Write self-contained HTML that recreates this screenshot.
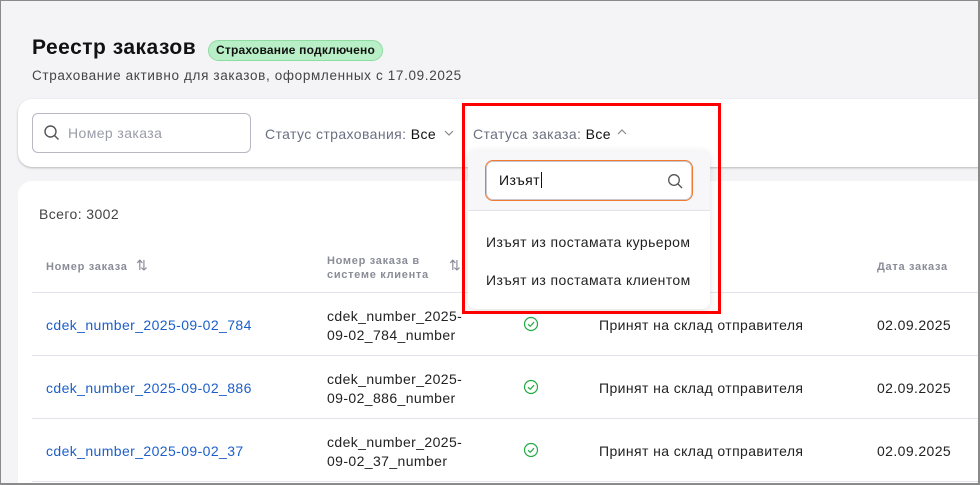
<!DOCTYPE html>
<html><head><meta charset="utf-8"><style>
*{box-sizing:border-box;margin:0;padding:0}
html{overflow:hidden;width:980px;height:485px}
body{width:980px;height:485px;overflow:hidden;background:#f4f4f6;font-family:"Liberation Sans",sans-serif;position:relative;color:#1a1a1a;letter-spacing:.4px}
.frame{position:absolute;left:0;top:0;width:980px;height:485px;border:1px solid #8a8a8a;border-right:2px solid #8a8a8a;border-bottom:2px solid #8a8a8a;pointer-events:none;z-index:20}
.abs{position:absolute}
h1{position:absolute;left:32px;top:36px;font-size:21px;font-weight:bold;color:#111;letter-spacing:.5px}
.badge{position:absolute;left:208px;top:40px;height:21px;padding:0 7px;background:#b9efc6;border:1px solid #8fdca3;border-radius:11px;font-size:12px;font-weight:bold;line-height:19px;color:#111;letter-spacing:.2px}
.sub{left:32px;top:68px;font-size:13.5px;color:#444;letter-spacing:.65px}
.card1{left:18px;top:99px;width:980px;height:68px;background:#fff;border-radius:14px;box-shadow:0 1px 2px rgba(0,0,0,.25)}
.search{left:32px;top:113px;width:219px;height:40px;border:1px solid #b8b8c4;border-radius:6px;background:#fff}
.filter{font-size:14px;color:#6b7080}
.filter b{font-weight:normal;color:#111}
.card2{left:18px;top:181px;width:980px;height:304px;background:#fff;border-radius:14px 14px 0 0}
.th{font-size:11px;font-weight:bold;color:#8a8d98;letter-spacing:.7px}
.line{left:32px;width:960px;height:1px;background:#e2e2ea}
.link{font-size:14px;color:#1d5fc9}
.cell{font-size:14px;color:#222}
.dd{left:468px;top:150px;width:242px;height:159px;background:#fff;border-radius:8px;box-shadow:0 2px 8px rgba(0,0,0,.12);z-index:5}
.red{left:462px;top:103px;width:259px;height:211px;border:3px solid #f00;z-index:10}
</style></head><body>
<h1>Реестр заказов</h1>
<div class="badge">Страхование подключено</div>
<div class="abs sub">Страхование активно для заказов, оформленных с 17.09.2025</div>
<div class="abs card1"></div>
<div class="abs search">
<svg class="abs" style="left:10px;top:10px" width="18" height="18" viewBox="0 0 18 18"><circle cx="7.5" cy="7.5" r="5.5" fill="none" stroke="#555" stroke-width="1.4"/><path d="M11.5 11.5L15.5 15.5" stroke="#555" stroke-width="1.4"/></svg>
<span class="abs" style="left:35px;top:11px;font-size:14px;color:#9a9ca8">Номер заказа</span></div>
<div class="abs filter" style="left:265px;top:126px">Статус страхования: <b>Все</b></div>
<svg class="abs" style="left:444px;top:129px" width="10" height="8" viewBox="0 0 10 8"><path d="M1 2L5 6L9 2" fill="none" stroke="#888" stroke-width="1.2"/></svg>
<div class="abs filter" style="left:473px;top:126px">Статуса заказа: <b>Все</b></div>
<svg class="abs" style="left:617px;top:128px" width="10" height="8" viewBox="0 0 10 8"><path d="M1 6L5 2L9 6" fill="none" stroke="#888" stroke-width="1.2"/></svg>
<div class="abs card2"></div>
<div class="abs" style="left:39px;top:206px;font-size:14px;color:#444">Всего: 3002</div>
<div class="abs th" style="left:46px;top:261px">Номер заказа</div>
<div class="abs" style="left:136px;top:257px;font-size:14px;color:#8a8d98">⇅</div>
<div class="abs th" style="left:327px;top:254px;line-height:14px">Номер заказа в<br>системе клиента</div>
<div class="abs" style="left:449px;top:257px;font-size:14px;color:#8a8d98">⇅</div>
<div class="abs th" style="left:877px;top:261px">Дата заказа</div>
<div class="abs line" style="top:292px"></div>
<div class="abs line" style="top:355px"></div>
<div class="abs line" style="top:418px"></div>
<div class="abs line" style="top:481px"></div>

<div class="abs link" style="left:46px;top:317px">cdek_number_2025-09-02_784</div>
<div class="abs cell" style="left:327px;top:307px;line-height:19px">cdek_number_2025-<br>09-02_784_number</div>
<div class="abs link" style="left:46px;top:380px">cdek_number_2025-09-02_886</div>
<div class="abs cell" style="left:327px;top:370px;line-height:19px">cdek_number_2025-<br>09-02_886_number</div>
<div class="abs link" style="left:46px;top:443px">cdek_number_2025-09-02_37</div>
<div class="abs cell" style="left:327px;top:433px;line-height:19px">cdek_number_2025-<br>09-02_37_number</div>

<svg class="abs" style="left:523px;top:316px" width="16" height="16" viewBox="0 0 16 16"><circle cx="8" cy="8" r="6.5" fill="none" stroke="#22aa44" stroke-width="1.2"/><path d="M5 8.2L7.2 10.3L11 6.2" fill="none" stroke="#22aa44" stroke-width="1.2"/></svg>
<svg class="abs" style="left:523px;top:379px" width="16" height="16" viewBox="0 0 16 16"><circle cx="8" cy="8" r="6.5" fill="none" stroke="#22aa44" stroke-width="1.2"/><path d="M5 8.2L7.2 10.3L11 6.2" fill="none" stroke="#22aa44" stroke-width="1.2"/></svg>
<svg class="abs" style="left:523px;top:442px" width="16" height="16" viewBox="0 0 16 16"><circle cx="8" cy="8" r="6.5" fill="none" stroke="#22aa44" stroke-width="1.2"/><path d="M5 8.2L7.2 10.3L11 6.2" fill="none" stroke="#22aa44" stroke-width="1.2"/></svg>
<div class="abs cell" style="left:599px;top:317px">Принят на склад отправителя</div>
<div class="abs cell" style="left:599px;top:380px">Принят на склад отправителя</div>
<div class="abs cell" style="left:599px;top:443px">Принят на склад отправителя</div>
<div class="abs cell" style="left:877px;top:317px">02.09.2025</div>
<div class="abs cell" style="left:877px;top:380px">02.09.2025</div>
<div class="abs cell" style="left:877px;top:443px">02.09.2025</div>

<div class="abs dd">
<div class="abs" style="left:0;top:0;width:242px;height:61px;background:#f7f7f9;border-radius:8px 8px 0 0;border-bottom:1px solid #e2e2ea"></div>
<div class="abs" style="left:17px;top:10px;width:208px;height:41px;border:1px solid #f07a30;border-radius:8px;background:#fff;box-shadow:inset 0 0 0 1px #c8c8d0">
<span class="abs" style="left:13px;top:11px;font-size:14px;color:#111">Изъят<span style="border-left:1px solid #111;margin-left:1px"></span></span>
<svg class="abs" style="left:181px;top:12px" width="17" height="17" viewBox="0 0 17 17"><circle cx="7" cy="7" r="5.3" fill="none" stroke="#555" stroke-width="1.3"/><path d="M11 11L15 15" stroke="#555" stroke-width="1.3"/></svg></div>
<div class="abs" style="left:18px;top:84px;font-size:14px;color:#222">Изъят из постамата курьером</div>
<div class="abs" style="left:18px;top:122px;font-size:14px;color:#222">Изъят из постамата клиентом</div>
</div>
<div class="abs red"></div>
<div class="frame"></div>
</body></html>
